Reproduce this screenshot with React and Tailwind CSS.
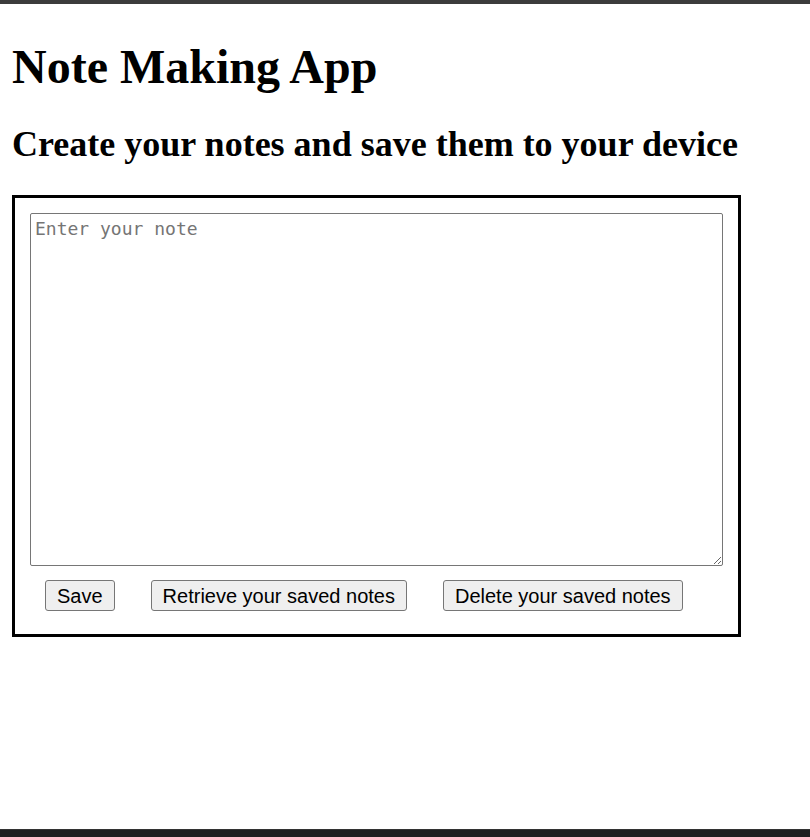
export default function App() {
  return (
    <div className="h-[837px] bg-white flex flex-col overflow-hidden">
      <div className="h-[4px] bg-[#3c3c3c]" />

      <div className="flex-1 px-[12px]" style={{ fontFamily: '"Liberation Serif", "Times New Roman", serif' }}>
        <h1 className="mt-[36px] text-[48px] font-bold leading-[53px] text-black">Note Making App</h1>
        <h2 className="mt-[31px] text-[36px] font-bold leading-[40px] text-black">Create your notes and save them to your device</h2>

        <div className="mt-[31px] w-[729px] border-[3px] border-black p-[15px]">
          <textarea
            className="block w-[693px] h-[353px] border border-[#767676] rounded-[2px] px-[4px] py-[3px] text-[18px] leading-[24px] text-black placeholder:text-[#757575] outline-none resize"
            style={{ fontFamily: '"DejaVu Sans Mono", "Liberation Mono", monospace' }}
            placeholder="Enter your note"
          />
          <div className="mt-[14px] mb-[8px] flex gap-[36px] pl-[15px]" style={{ fontFamily: '"Liberation Sans", Arial, sans-serif' }}>
            <button className="h-[31px] px-[11px] bg-[#efefef] border border-[#767676] rounded-[3px] text-[20px] text-black leading-none">Save</button>
            <button className="h-[31px] px-[11px] bg-[#efefef] border border-[#767676] rounded-[3px] text-[20px] text-black leading-none">Retrieve your saved notes</button>
            <button className="h-[31px] px-[11px] bg-[#efefef] border border-[#767676] rounded-[3px] text-[20px] text-black leading-none">Delete your saved notes</button>
          </div>
        </div>
      </div>

      <div className="h-[8px] bg-[#1e1e1e] border-t border-[#333333]" />
    </div>
  );
}
